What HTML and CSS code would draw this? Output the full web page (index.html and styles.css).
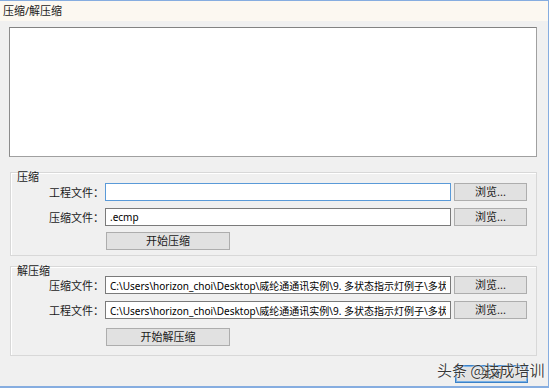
FILE: index.html
```html
<!DOCTYPE html>
<html lang="zh-CN">
<head>
  <meta charset="UTF-8" />
  <title>压缩/解压缩</title>
  <link rel="stylesheet" href="styles.css">
</head>
<body>
  <div class="window">
    <div class="titlebar">压缩/解压缩</div>

    <div class="content">
      <!-- Log output -->
      <div class="log"></div>

      <!-- Compress -->
      <section class="group group-pack">
        <span class="legend">压缩</span>
        <div class="rows">
          <label class="field-label">工程文件：</label>
          <input class="field field-focus" type="text" value="">
          <button class="btn">浏览...</button>

          <label class="field-label">压缩文件：</label>
          <input class="field" type="text" value=".ecmp">
          <button class="btn">浏览...</button>

          <span></span>
          <button class="btn btn-start">开始压缩</button>
        </div>
      </section>

      <!-- Decompress -->
      <section class="group group-unpack">
        <span class="legend">解压缩</span>
        <div class="rows">
          <label class="field-label">压缩文件：</label>
          <input class="field" type="text" value="C:\Users\horizon_choi\Desktop\威纶通通讯实例\9. 多状态指示灯例子\多状态指示灯例子.ecmp">
          <button class="btn">浏览...</button>

          <label class="field-label">工程文件：</label>
          <input class="field" type="text" value="C:\Users\horizon_choi\Desktop\威纶通通讯实例\9. 多状态指示灯例子\多状态指示灯例子">
          <button class="btn">浏览...</button>

          <span></span>
          <button class="btn btn-start">开始解压缩</button>
        </div>
      </section>

      <div class="footer">
        <button class="btn btn-close">关闭</button>
      </div>
    </div>

    <div class="watermark">头条 @技成培训</div>
  </div>
</body>
</html>
```

FILE: styles.css
```css
:root {
  --frame-blue: #86ade0;
  --dialog-bg: #f0f0f0;
  --text-color: #1a1a1a;
  --font-ui: "Noto Sans", "Noto Sans CJK SC", sans-serif;
}

body {
  margin: 0;
  background: #fff;
  font-family: var(--font-ui);
  font-size: 11px;
  color: var(--text-color);
}

.window {
  position: relative;
  width: 548px;
  height: 385px;
  border-top: 1px solid var(--frame-blue);
  border-right: 1px solid var(--frame-blue);
  border-bottom: 2px solid var(--frame-blue);
  display: flex;
  flex-direction: column;
  overflow: hidden;
}

.titlebar {
  height: 20px;
  line-height: 20px;
  padding-left: 3px;
  background: #fcf8f1;
}

.content {
  flex: 1;
  background: var(--dialog-bg);
  padding: 6px 11px 0 9px;
  display: flex;
  flex-direction: column;
  overflow: hidden;
}

.log {
  height: 128px;
  background: #fff;
  border: 1px solid #a0a0a0;
  border-top-color: #828282;
  border-left-color: #8c8c8c;
}

.group {
  margin: 15px 0 0 1px;
  border: 1px solid #d8d8d8;
  box-shadow: inset 1px 1px 0 #fff;
}

.group-pack {
  padding: 0 0 5px;
}

.group-unpack {
  margin-top: 10px;
  padding: 0 0 9px;
}

.legend {
  display: table;
  margin: -1px 0 0 5px;
  padding: 0 1px;
  height: 10px;
  line-height: 10px;
}

.rows {
  display: grid;
  grid-template-columns: 91px 346px 73px;
  column-gap: 3px;
  row-gap: 7px;
  align-items: center;
}

.group-pack .rows {
  padding-top: 1px;
}

.field-label {
  text-align: right;
  white-space: nowrap;
  margin-right: -2px;
}

.field {
  box-sizing: border-box;
  height: 18px;
  width: 100%;
  margin: 0;
  padding: 0 4px;
  border: 1px solid #7a7a7a;
  background: #fff;
  font: inherit;
  font-size: 10px;
  color: #000;
  outline: none;
}

.field-focus {
  border-color: #5a9ad8;
}

.btn {
  box-sizing: border-box;
  height: 18px;
  margin: 0;
  padding: 0;
  border: 1px solid #adadad;
  background: #e1e1e1;
  font: inherit;
  color: var(--text-color);
  line-height: 16px;
}

.btn-start {
  width: 124px;
  margin-left: 1px;
  margin-top: -1px;
}

.group-unpack .btn-start {
  margin-top: 2px;
}

.footer {
  display: flex;
  justify-content: flex-end;
  padding: 9px 9px 0 0;
}

.btn-close {
  width: 73px;
  border-color: #3c82c8;
  box-shadow: inset 0 0 0 1px #7ab1e6;
}

.watermark {
  position: absolute;
  left: 437px;
  top: 358px;
  font-family: "Noto Sans CJK SC", sans-serif;
  font-size: 15px;
  color: rgba(30, 30, 30, 0.88);
  text-shadow: 0 0 2px #fff, 0 0 1px #fff;
  white-space: nowrap;
}
```
